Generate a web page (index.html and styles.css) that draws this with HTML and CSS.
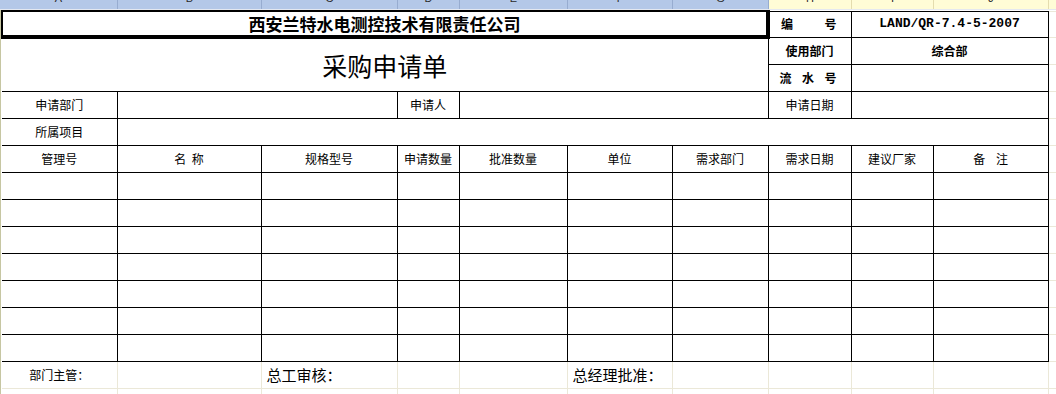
FILE: index.html
```html
<!DOCTYPE html>
<html lang="zh-CN">
<head>
<meta charset="utf-8">
<title>采购申请单</title>
<link rel="stylesheet" href="styles.css">
</head>
<body>
<div class="colhead">
  <div class="ch blue"><span>A</span></div>
  <div class="ch blue"><span>B</span></div>
  <div class="ch blue"><span>C</span></div>
  <div class="ch blue"><span>D</span></div>
  <div class="ch blue"><span>E</span></div>
  <div class="ch blue"><span>F</span></div>
  <div class="ch blue"><span>G</span></div>
  <div class="ch yel"><span>H</span></div>
  <div class="ch yel"><span>I</span></div>
  <div class="ch yel"><span>J</span></div>
  <div class="ch yel last"><span></span></div>
</div>
<div class="sheet">
<table class="form">
  <colgroup>
    <col class="w-a"><col class="w-b"><col class="w-c"><col class="w-d"><col class="w-e">
    <col class="w-f"><col class="w-g"><col class="w-h"><col class="w-i"><col class="w-j"><col class="w-k">
  </colgroup>
  <tr class="first">
    <td colspan="7" class="title">西安兰特水电测控技术有限责任公司</td>
    <td class="blabel top"><div class="spread"><span>编</span><span>号</span></div></td>
    <td colspan="2" class="code top">LAND/QR-7.4-5-2007</td>
    <td class="k"></td>
  </tr>
  <tr>
    <td colspan="7" rowspan="2" class="big noleft">采购申请单</td>
    <td class="blabel">使用部门</td>
    <td colspan="2" class="blabel">综合部</td>
    <td class="k"></td>
  </tr>
  <tr>
    <td class="blabel"><div class="spread"><span>流</span><span>水</span><span>号</span></div></td>
    <td colspan="2"></td>
    <td class="k"></td>
  </tr>
  <tr>
    <td class="noleft">申请部门</td>
    <td colspan="2"></td>
    <td>申请人</td>
    <td colspan="3"></td>
    <td>申请日期</td>
    <td colspan="2"></td>
    <td class="k"></td>
  </tr>
  <tr>
    <td class="noleft">所属项目</td>
    <td colspan="9"></td>
    <td class="k"></td>
  </tr>
  <tr>
    <td class="noleft">管理号</td>
    <td>名&nbsp;&nbsp;称</td>
    <td>规格型号</td>
    <td>申请数量</td>
    <td>批准数量</td>
    <td>单位</td>
    <td>需求部门</td>
    <td>需求日期</td>
    <td>建议厂家</td>
    <td>备&nbsp;&nbsp;&nbsp;&nbsp;注</td>
    <td class="k"></td>
  </tr>
  <tr><td class="noleft"></td><td></td><td></td><td></td><td></td><td></td><td></td><td></td><td></td><td></td><td class="k"></td></tr>
  <tr><td class="noleft"></td><td></td><td></td><td></td><td></td><td></td><td></td><td></td><td></td><td></td><td class="k"></td></tr>
  <tr><td class="noleft"></td><td></td><td></td><td></td><td></td><td></td><td></td><td></td><td></td><td></td><td class="k"></td></tr>
  <tr><td class="noleft"></td><td></td><td></td><td></td><td></td><td></td><td></td><td></td><td></td><td></td><td class="k"></td></tr>
  <tr><td class="noleft"></td><td></td><td></td><td></td><td></td><td></td><td></td><td></td><td></td><td></td><td class="k"></td></tr>
  <tr><td class="noleft"></td><td></td><td></td><td></td><td></td><td></td><td></td><td></td><td></td><td></td><td class="k"></td></tr>
  <tr><td class="noleft"></td><td></td><td></td><td></td><td></td><td></td><td></td><td></td><td></td><td></td><td class="k"></td></tr>
  <tr class="foot">
    <td class="noleft">部门主管：</td>
    <td></td>
    <td class="sign">总工审核：</td>
    <td></td>
    <td></td>
    <td class="sign">总经理批准：</td>
    <td></td><td></td><td></td><td></td>
    <td class="k"></td>
  </tr>
  <tr class="foot">
    <td class="noleft"></td><td></td><td></td><td></td><td></td><td></td><td></td><td></td><td></td><td></td><td class="k"></td>
  </tr>
</table>
</div>
</body>
</html>
```

FILE: styles.css
```css
html, body {
  margin: 0;
  padding: 0;
  background: #ffffff;
}

body {
  width: 1056px;
  height: 394px;
  overflow: hidden;
  font-family: "Noto Sans CJK SC", "Liberation Sans", sans-serif;
  color: #000;
}

.colhead {
  display: grid;
  grid-template-columns: 118px 144px 136px 62px 108px 105px 96px 83px 82px 115px 1fr;
  height: 9px;
  border-bottom: 1px solid #e4e8f0;
  overflow: hidden;
}

.ch {
  overflow: hidden;
  text-align: center;
  font-family: "Liberation Sans", sans-serif;
  font-size: 11px;
  color: #2a2a2a;
}

.ch span {
  display: block;
  line-height: 13px;
  height: 13px;
  margin-top: -8px;
}

.ch.blue {
  background: #b4c8e8;
  border-right: 1px solid #97acd0;
}

.ch.yel {
  background: #fffcd6;
  border-right: 1px solid #e4dcae;
}

.ch.last {
  border-right: none;
}

.sheet {
  border-left: 1px solid #c6c6a2;
  height: 384px;
  overflow: hidden;
}

.form {
  border-collapse: collapse;
  table-layout: fixed;
  width: 1055px;
}

.w-a { width: 115px; }
.w-b { width: 144px; }
.w-c { width: 136px; }
.w-d { width: 62px; }
.w-e { width: 108px; }
.w-f { width: 105px; }
.w-g { width: 96px; }
.w-h { width: 83px; }
.w-i { width: 82px; }
.w-j { width: 115px; }
.w-k { width: 8px; }

.form tr {
  height: 27px;
}

.form tr.first {
  height: 26px;
}

.form td {
  border: 1px solid #000;
  padding: 0;
  text-align: center;
  vertical-align: middle;
  font-size: 12px;
  line-height: 14px;
  white-space: nowrap;
  overflow: hidden;
}

.form td.noleft {
  border-left: none;
}

.form td.k {
  border-top: 1px solid #ebe8d8;
  border-bottom: 1px solid #ebe8d8;
  border-right: none;
}

.form td.title {
  border-top: 2px solid #000;
  border-left: 2px solid #000;
  border-right: 4px solid #000;
  border-bottom: 4px solid #000;
  font-size: 17px;
  font-weight: 700;
  line-height: 20px;
}

.form td.top {
  border-top: 1px solid #000;
}

.form td.big {
  font-size: 25px;
  line-height: 30px;
  font-weight: 400;
}

.form td.blabel {
  font-weight: 700;
}

.spread {
  display: flex;
  justify-content: space-between;
  padding: 0 14px 0 11px;
}

.form td.code {
  font-family: "Liberation Mono", monospace;
  font-size: 13px;
  font-weight: 700;
}

.form tr.foot td {
  border-top: none;
  border-left: 1px solid #ebe8d8;
  border-right: 1px solid #ebe8d8;
  border-bottom: 1px solid #ebe8d8;
}

.form tr.foot td.noleft {
  border-left: none;
}

.form tr.foot td.k {
  border-right: none;
}

.form td.sign {
  text-align: left;
  padding-left: 5px;
  font-size: 15px;
  overflow: visible;
}
```
